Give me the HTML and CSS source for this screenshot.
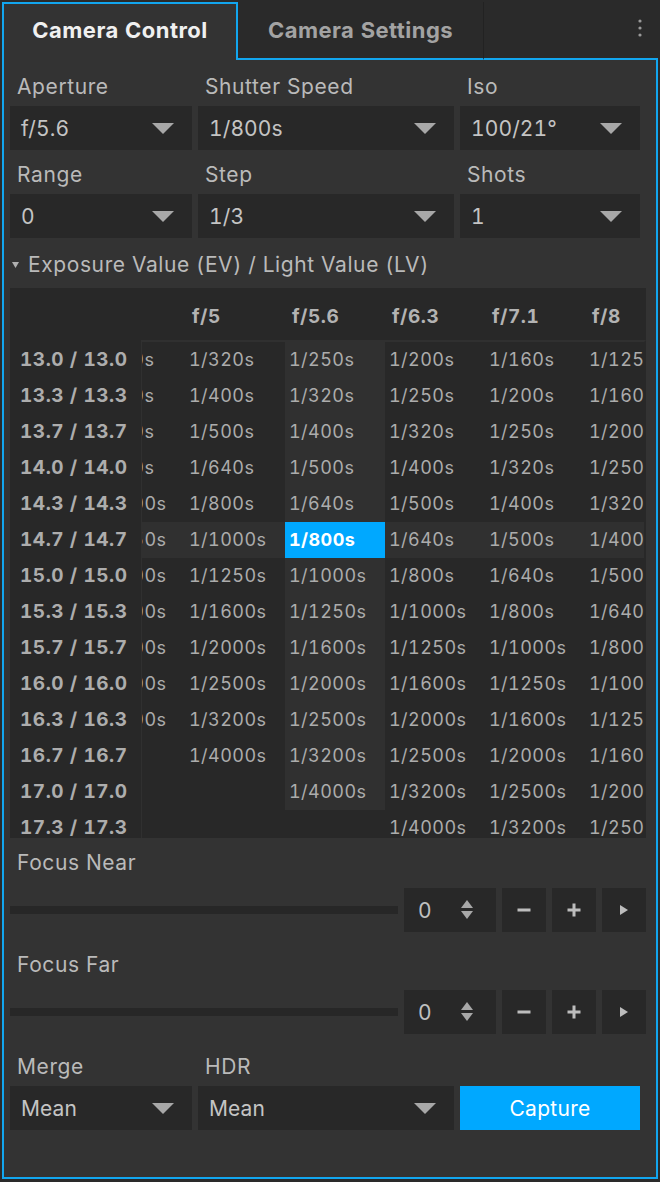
FILE: index.html
```html
<!DOCTYPE html>
<html>
<head>
<meta charset="utf-8">
<link rel="stylesheet" href="styles.css">
</head>
<body>
<div class="app">
  <div class="tabs">
    <div class="tab tab-active">Camera Control</div>
    <div class="tab tab-idle">Camera Settings</div>
    <div class="tab-fill">
      <svg width="4" height="18" viewBox="0 0 4 18"><circle cx="2" cy="2" r="1.6" fill="#9a9a9a"/><circle cx="2" cy="9" r="1.6" fill="#9a9a9a"/><circle cx="2" cy="16" r="1.6" fill="#9a9a9a"/></svg>
    </div>
  </div>
  <div class="content">
    <div class="fields">
      <div class="field"><div class="label">Aperture</div><div class="select"><span>f/5.6</span><svg width="22" height="11" viewBox="0 0 22 11"><polygon points="0,0 22,0 11,11" fill="#a8a8a8"/></svg></div></div>
      <div class="field"><div class="label">Shutter Speed</div><div class="select"><span>1/800s</span><svg width="22" height="11" viewBox="0 0 22 11"><polygon points="0,0 22,0 11,11" fill="#a8a8a8"/></svg></div></div>
      <div class="field"><div class="label">Iso</div><div class="select"><span>100/21°</span><svg width="22" height="11" viewBox="0 0 22 11"><polygon points="0,0 22,0 11,11" fill="#a8a8a8"/></svg></div></div>
      <div class="field"><div class="label">Range</div><div class="select"><span>0</span><svg width="22" height="11" viewBox="0 0 22 11"><polygon points="0,0 22,0 11,11" fill="#a8a8a8"/></svg></div></div>
      <div class="field"><div class="label">Step</div><div class="select"><span>1/3</span><svg width="22" height="11" viewBox="0 0 22 11"><polygon points="0,0 22,0 11,11" fill="#a8a8a8"/></svg></div></div>
      <div class="field"><div class="label">Shots</div><div class="select"><span>1</span><svg width="22" height="11" viewBox="0 0 22 11"><polygon points="0,0 22,0 11,11" fill="#a8a8a8"/></svg></div></div>
    </div>

    <div class="section"><svg width="7" height="6" viewBox="0 0 7 6"><polygon points="0,0 7,0 3.5,6" fill="#b0b0b0"/></svg>Exposure Value (EV) / Light Value (LV)</div>

    <div class="ev">
      <div class="corner"></div>
      <div class="heads">
        <div class="heads-track">
          <div class="head">f/4.5</div>
          <div class="head">f/5</div>
          <div class="head">f/5.6</div>
          <div class="head">f/6.3</div>
          <div class="head">f/7.1</div>
          <div class="head">f/8</div>
        </div>
      </div>
      <div class="rowheads">
        <div class="rh">13.0 / 13.0</div>
        <div class="rh">13.3 / 13.3</div>
        <div class="rh">13.7 / 13.7</div>
        <div class="rh">14.0 / 14.0</div>
        <div class="rh">14.3 / 14.3</div>
        <div class="rh">14.7 / 14.7</div>
        <div class="rh">15.0 / 15.0</div>
        <div class="rh">15.3 / 15.3</div>
        <div class="rh">15.7 / 15.7</div>
        <div class="rh">16.0 / 16.0</div>
        <div class="rh">16.3 / 16.3</div>
        <div class="rh">16.7 / 16.7</div>
        <div class="rh">17.0 / 17.0</div>
        <div class="rh">17.3 / 17.3</div>
      </div>
      <div class="body">
        <div class="body-track">
          <div class="col">
            <div class="cell">1/400s</div><div class="cell">1/500s</div><div class="cell">1/640s</div><div class="cell">1/800s</div><div class="cell">1/1000s</div><div class="cell r">1/1250s</div><div class="cell">1/1600s</div><div class="cell">1/2000s</div><div class="cell">1/2500s</div><div class="cell">1/3200s</div><div class="cell">1/4000s</div><div class="cell"></div><div class="cell"></div><div class="cell"></div>
          </div>
          <div class="col">
            <div class="cell">1/320s</div><div class="cell">1/400s</div><div class="cell">1/500s</div><div class="cell">1/640s</div><div class="cell">1/800s</div><div class="cell r">1/1000s</div><div class="cell">1/1250s</div><div class="cell">1/1600s</div><div class="cell">1/2000s</div><div class="cell">1/2500s</div><div class="cell">1/3200s</div><div class="cell">1/4000s</div><div class="cell"></div><div class="cell"></div>
          </div>
          <div class="col">
            <div class="cell c">1/250s</div><div class="cell c">1/320s</div><div class="cell c">1/400s</div><div class="cell c">1/500s</div><div class="cell c">1/640s</div><div class="cell s">1/800s</div><div class="cell c">1/1000s</div><div class="cell c">1/1250s</div><div class="cell c">1/1600s</div><div class="cell c">1/2000s</div><div class="cell c">1/2500s</div><div class="cell c">1/3200s</div><div class="cell c">1/4000s</div><div class="cell"></div>
          </div>
          <div class="col">
            <div class="cell">1/200s</div><div class="cell">1/250s</div><div class="cell">1/320s</div><div class="cell">1/400s</div><div class="cell">1/500s</div><div class="cell r">1/640s</div><div class="cell">1/800s</div><div class="cell">1/1000s</div><div class="cell">1/1250s</div><div class="cell">1/1600s</div><div class="cell">1/2000s</div><div class="cell">1/2500s</div><div class="cell">1/3200s</div><div class="cell">1/4000s</div>
          </div>
          <div class="col">
            <div class="cell">1/160s</div><div class="cell">1/200s</div><div class="cell">1/250s</div><div class="cell">1/320s</div><div class="cell">1/400s</div><div class="cell r">1/500s</div><div class="cell">1/640s</div><div class="cell">1/800s</div><div class="cell">1/1000s</div><div class="cell">1/1250s</div><div class="cell">1/1600s</div><div class="cell">1/2000s</div><div class="cell">1/2500s</div><div class="cell">1/3200s</div>
          </div>
          <div class="col">
            <div class="cell">1/125s</div><div class="cell">1/160s</div><div class="cell">1/200s</div><div class="cell">1/250s</div><div class="cell">1/320s</div><div class="cell r">1/400s</div><div class="cell">1/500s</div><div class="cell">1/640s</div><div class="cell">1/800s</div><div class="cell">1/1000s</div><div class="cell">1/1250s</div><div class="cell">1/1600s</div><div class="cell">1/2000s</div><div class="cell">1/2500s</div>
          </div>
        </div>
      </div>
    </div>

    <div class="label flabel">Focus Near</div>
    <div class="frow">
      <div class="track"></div>
      <div class="spin"><span>0</span><svg width="14" height="20" viewBox="0 0 14 20"><polygon points="7,0 13,8 1,8" fill="#a8a8a8"/><polygon points="1,11 13,11 7,19" fill="#a8a8a8"/></svg></div>
      <div class="btn"><svg width="14" height="14" viewBox="0 0 14 14"><rect x="0.5" y="5.5" width="13" height="3" fill="#bdbdbd"/></svg></div>
      <div class="btn"><svg width="14" height="14" viewBox="0 0 14 14"><rect x="0.5" y="5.5" width="13" height="3" fill="#bdbdbd"/><rect x="5.5" y="0.5" width="3" height="13" fill="#bdbdbd"/></svg></div>
      <div class="btn"><svg width="8" height="10" viewBox="0 0 8 10"><polygon points="0,0 8,5 0,10" fill="#bdbdbd"/></svg></div>
    </div>

    <div class="label flabel2">Focus Far</div>
    <div class="frow">
      <div class="track"></div>
      <div class="spin"><span>0</span><svg width="14" height="20" viewBox="0 0 14 20"><polygon points="7,0 13,8 1,8" fill="#a8a8a8"/><polygon points="1,11 13,11 7,19" fill="#a8a8a8"/></svg></div>
      <div class="btn"><svg width="14" height="14" viewBox="0 0 14 14"><rect x="0.5" y="5.5" width="13" height="3" fill="#bdbdbd"/></svg></div>
      <div class="btn"><svg width="14" height="14" viewBox="0 0 14 14"><rect x="0.5" y="5.5" width="13" height="3" fill="#bdbdbd"/><rect x="5.5" y="0.5" width="3" height="13" fill="#bdbdbd"/></svg></div>
      <div class="btn"><svg width="8" height="10" viewBox="0 0 8 10"><polygon points="0,0 8,5 0,10" fill="#bdbdbd"/></svg></div>
    </div>

    <div class="fields bottom">
      <div class="field"><div class="label">Merge</div><div class="select"><span>Mean</span><svg width="22" height="11" viewBox="0 0 22 11"><polygon points="0,0 22,0 11,11" fill="#a8a8a8"/></svg></div></div>
      <div class="field"><div class="label">HDR</div><div class="select"><span>Mean</span><svg width="22" height="11" viewBox="0 0 22 11"><polygon points="0,0 22,0 11,11" fill="#a8a8a8"/></svg></div></div>
      <div class="field"><div class="label">&nbsp;</div><div class="capture">Capture</div></div>
    </div>
  </div>
</div>
</body>
</html>
```

FILE: styles.css
```css
* { box-sizing: border-box; }
body {
  margin: 0;
  background: #2a2a2a;
  font-family: Inter, "Noto Sans", sans-serif;
  font-variant-numeric: tabular-nums;
  letter-spacing: 0.6px;
}
.app { margin: 2px; width: 656px; }

.tabs { display: flex; height: 58px; }
.tab {
  height: 58px;
  display: flex;
  align-items: center;
  justify-content: center;
  font-size: 22px;
  font-weight: 700;
  letter-spacing: 0.45px;
}
.tab-active {
  width: 236px;
  border: 2px solid #12a6ef;
  border-bottom: 0;
  background: #333333;
  color: #f0f0f0;
  padding-bottom: 4px;
}
.tab-idle {
  width: 246px;
  background: #2a2a2a;
  border-bottom: 2px solid #12a6ef;
  border-right: 1px solid #222222;
  color: #a3a3a3;
}
.tab-fill {
  flex: 1;
  height: 58px;
  background: #2a2a2a;
  border-bottom: 2px solid #12a6ef;
  display: flex;
  justify-content: flex-end;
  align-items: center;
  padding: 0 16px 4px 0;
}

.content {
  height: 1119px;
  border: 2px solid #12a6ef;
  border-top: 0;
  background: #333333;
  padding: 14px 10px 0 6px;
}

.fields {
  display: grid;
  grid-template-columns: 182px 256px 180px;
  column-gap: 6px;
  row-gap: 12px;
}
.fields.bottom { margin-top: 20px; }
.field { display: flex; flex-direction: column; gap: 6px; }
.label {
  font-size: 21px;
  line-height: 26px;
  color: #bababa;
  padding-left: 7px;
}
.select {
  height: 44px;
  background: #282828;
  display: flex;
  align-items: center;
  padding: 0 18px 0 11px;
  font-size: 21px;
  color: #c4c4c4;
  letter-spacing: 0.1px;
}
.select svg { margin-left: auto; }

.section {
  margin-top: 14px;
  display: flex;
  align-items: center;
  font-size: 21px;
  line-height: 26px;
  color: #bababa;
}
.section svg { margin: 0 9px 0 2px; }

.ev {
  margin-top: 10px;
  height: 550px;
  background: #282828;
  display: grid;
  grid-template-columns: 131px 505px;
  grid-template-rows: 52px 498px;
  overflow: hidden;
}
.heads { overflow: hidden; display: flex; }
.heads-track { display: flex; margin-left: -56px; }
.head {
  width: 100px;
  flex-shrink: 0;
  padding: 6px 0 0 7px;
  line-height: 46px;
  font-size: 19px;
  font-weight: 700;
  color: #b3b3b3;
  letter-spacing: 0.6px;
}
.rowheads { padding-top: 2px; }
.rh {
  height: 36px;
  line-height: 36px;
  padding-left: 10px;
  font-size: 19px;
  font-weight: 700;
  color: #adadad;
  white-space: nowrap;
  letter-spacing: 0.55px;
}
.body {
  border-top: 2px solid #303030;
  border-left: 1px solid #303030;
  border-right: 2px solid #282828;
  overflow: hidden;
  display: flex;
}
.body-track { display: flex; margin-left: -57px; }
.col { width: 100px; flex-shrink: 0; }
.cell {
  height: 36px;
  line-height: 36px;
  padding-left: 4px;
  font-size: 18px;
  color: #acacac;
  white-space: nowrap;
  letter-spacing: 0.45px;
}
.cell.c, .cell.r { background: #303030; }
.cell.s { background: #00a8ff; color: #ffffff; font-weight: 700; }

.flabel { margin-top: 12px; }
.flabel2 { margin-top: 20px; }
.frow {
  margin-top: 12px;
  display: flex;
  align-items: center;
  gap: 6px;
}
.track { flex: 1; height: 8px; background: #272727; }
.spin {
  width: 92px;
  height: 44px;
  background: #282828;
  display: flex;
  align-items: center;
  justify-content: space-between;
  padding: 0 22px 0 14px;
  font-size: 21px;
  color: #c0c0c0;
}
.btn {
  width: 44px;
  height: 44px;
  background: #282828;
  display: flex;
  align-items: center;
  justify-content: center;
}
.capture {
  height: 44px;
  background: #00a8ff;
  color: #ffffff;
  font-size: 21px;
  display: flex;
  align-items: center;
  justify-content: center;
  letter-spacing: 0.3px;
}
```
